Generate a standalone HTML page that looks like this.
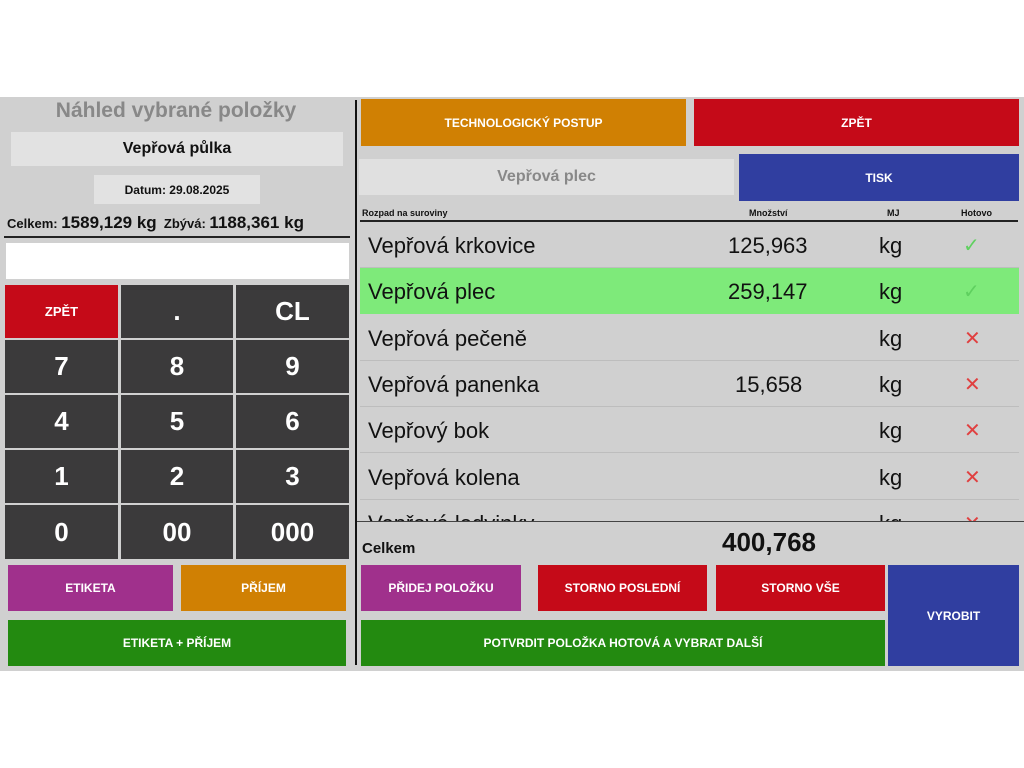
<!DOCTYPE html>
<html><head><meta charset="utf-8"><style>
*{margin:0;padding:0;box-sizing:border-box}
body{width:1024px;height:768px;background:#fff;position:relative;font-family:"Liberation Sans",sans-serif;overflow:hidden}
.a{position:absolute}
.app{left:0;top:97px;width:1024px;height:574px;background:#d0d0d0}
.b{position:absolute;display:flex;align-items:center;justify-content:center;color:#fff;font-weight:bold;font-size:12px;text-align:center}
.k{background:#3b3a3b;font-size:26px}
.r{position:absolute;left:360px;width:659px;height:46px;border-bottom:1px solid #bdbdbd;font-size:22px;color:#111}
.r span{position:absolute;top:11px}
.x{color:#e04040;font-size:20px}
.c{color:#5fd05f;font-size:20px}
</style></head><body>
<div class="a app"></div>
<div class="a" style="left:0;top:99px;width:352px;text-align:center;font-size:21px;font-weight:bold;color:#888">Náhled vybrané položky</div>
<div class="b" style="left:11px;top:132px;width:332px;height:34px;background:#e2e2e2;color:#111;font-size:16px">Vepřová půlka</div>
<div class="b" style="left:94px;top:175px;width:166px;height:29px;background:#e2e2e2;color:#111;font-size:12px">Datum: 29.08.2025</div>
<div class="a" style="left:7px;top:213px;font-size:13px;font-weight:bold;color:#111;white-space:nowrap">Celkem: <span style="font-size:17px">1589,129 kg</span>&nbsp; Zbývá: <span style="font-size:17px">1188,361 kg</span></div>
<div class="a" style="left:4px;top:236px;width:346px;height:2px;background:#222"></div>
<div class="a" style="left:6px;top:243px;width:343px;height:36px;background:#fff"></div>
<div class="b" style="left:5px;top:285px;width:113px;height:53px;background:#c50a18;font-size:13px">ZPĚT</div>
<div class="b k" style="left:121px;top:285px;width:112px;height:53px">.</div>
<div class="b k" style="left:236px;top:285px;width:113px;height:53px">CL</div>
<div class="b k" style="left:5px;top:340px;width:113px;height:53px">7</div>
<div class="b k" style="left:121px;top:340px;width:112px;height:53px">8</div>
<div class="b k" style="left:236px;top:340px;width:113px;height:53px">9</div>
<div class="b k" style="left:5px;top:395px;width:113px;height:53px">4</div>
<div class="b k" style="left:121px;top:395px;width:112px;height:53px">5</div>
<div class="b k" style="left:236px;top:395px;width:113px;height:53px">6</div>
<div class="b k" style="left:5px;top:450px;width:113px;height:53px">1</div>
<div class="b k" style="left:121px;top:450px;width:112px;height:53px">2</div>
<div class="b k" style="left:236px;top:450px;width:113px;height:53px">3</div>
<div class="b k" style="left:5px;top:505px;width:113px;height:54px">0</div>
<div class="b k" style="left:121px;top:505px;width:112px;height:54px">00</div>
<div class="b k" style="left:236px;top:505px;width:113px;height:54px">000</div>
<div class="b" style="left:8px;top:565px;width:165px;height:46px;background:#a0308c">ETIKETA</div>
<div class="b" style="left:181px;top:565px;width:165px;height:46px;background:#d08003">PŘÍJEM</div>
<div class="b" style="left:8px;top:620px;width:338px;height:46px;background:#238a10">ETIKETA + PŘÍJEM</div>
<div class="a" style="left:355px;top:100px;width:2px;height:565px;background:#111"></div>
<div class="b" style="left:361px;top:99px;width:325px;height:47px;background:#d08003">TECHNOLOGICKÝ POSTUP</div>
<div class="b" style="left:694px;top:99px;width:325px;height:47px;background:#c50a18">ZPĚT</div>
<div class="b" style="left:359px;top:159px;width:375px;height:36px;background:#e0e0e0;color:#888;font-size:16px">Vepřová plec</div>
<div class="b" style="left:739px;top:154px;width:280px;height:47px;background:#303ea0">TISK</div>
<div class="a" style="left:362px;top:208px;font-size:9px;font-weight:bold;color:#111">Rozpad na suroviny</div>
<div class="a" style="left:749px;top:208px;font-size:9px;font-weight:bold;color:#111">Množství</div>
<div class="a" style="left:887px;top:208px;font-size:9px;font-weight:bold;color:#111">MJ</div>
<div class="a" style="left:961px;top:208px;font-size:9px;font-weight:bold;color:#111">Hotovo</div>
<div class="a" style="left:360px;top:220px;width:658px;height:2px;background:#222"></div>
<div class="a" style="left:358px;top:222px;width:666px;height:300px;overflow:hidden">
<div class="r" style="left:2px;top:0"><span style="left:8px">Vepřová krkovice</span><span style="left:368px">125,963</span><span style="left:519px">kg</span><span class="c" style="left:603px">✓</span></div>
<div class="r" style="left:2px;top:46px;background:#7eea7a;border-color:#7eea7a"><span style="left:8px">Vepřová plec</span><span style="left:368px">259,147</span><span style="left:519px">kg</span><span class="c" style="left:603px">✓</span></div>
<div class="r" style="left:2px;top:93px"><span style="left:8px">Vepřová pečeně</span><span style="left:519px">kg</span><span class="x" style="left:604px">✕</span></div>
<div class="r" style="left:2px;top:139px"><span style="left:8px">Vepřová panenka</span><span style="left:375px">15,658</span><span style="left:519px">kg</span><span class="x" style="left:604px">✕</span></div>
<div class="r" style="left:2px;top:185px"><span style="left:8px">Vepřový bok</span><span style="left:519px">kg</span><span class="x" style="left:604px">✕</span></div>
<div class="r" style="left:2px;top:232px"><span style="left:8px">Vepřová kolena</span><span style="left:519px">kg</span><span class="x" style="left:604px">✕</span></div>
<div class="r" style="left:2px;top:278px"><span style="left:8px">Vepřová ledvinky</span><span style="left:519px">kg</span><span class="x" style="left:604px">✕</span></div>
</div>
<div class="a" style="left:357px;top:521px;width:667px;height:1px;background:#444"></div>
<div class="a" style="left:362px;top:540px;font-size:15px;font-weight:bold;color:#111">Celkem</div>
<div class="a" style="left:722px;top:527px;font-size:26px;font-weight:bold;color:#111">400,768</div>
<div class="b" style="left:361px;top:565px;width:160px;height:46px;background:#a0308c">PŘIDEJ POLOŽKU</div>
<div class="b" style="left:538px;top:565px;width:169px;height:46px;background:#c50a18">STORNO POSLEDNÍ</div>
<div class="b" style="left:716px;top:565px;width:169px;height:46px;background:#c50a18">STORNO VŠE</div>
<div class="b" style="left:888px;top:565px;width:131px;height:101px;background:#303ea0">VYROBIT</div>
<div class="b" style="left:361px;top:620px;width:524px;height:46px;background:#238a10">POTVRDIT POLOŽKA HOTOVÁ A VYBRAT DALŠÍ</div>
</body></html>
